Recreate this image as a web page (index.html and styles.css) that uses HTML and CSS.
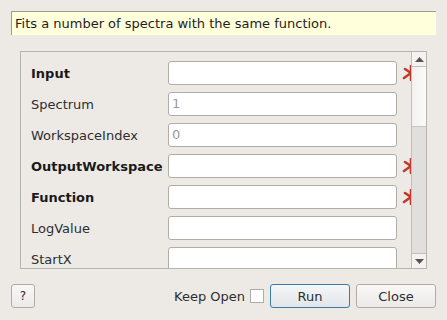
FILE: index.html
```
<!DOCTYPE html>
<html>
<head>
<meta charset="utf-8">
<link rel="stylesheet" href="styles.css">
</head>
<body>
<div class="desc">Fits a number of spectra with the same function.</div>
<div class="scrollarea">
  <div class="viewport">
    <div class="row"><span class="lbl req">Input</span><span class="field"></span><svg class="star" width="12" height="16" viewBox="0 0 12 16"><g stroke="#c0392b" stroke-width="2.6" stroke-linecap="round"><line x1="10" y1="8" x2="4" y2="4"/><line x1="10" y1="8" x2="3" y2="13"/><line x1="10" y1="8" x2="10" y2="1"/><line x1="10" y1="8" x2="10" y2="15"/></g></svg></div>
    <div class="row"><span class="lbl">Spectrum</span><span class="field ph">1</span></div>
    <div class="row"><span class="lbl">WorkspaceIndex</span><span class="field ph">0</span></div>
    <div class="row"><span class="lbl req">OutputWorkspace</span><span class="field"></span><svg class="star" width="12" height="16" viewBox="0 0 12 16"><g stroke="#c0392b" stroke-width="2.6" stroke-linecap="round"><line x1="10" y1="8" x2="4" y2="4"/><line x1="10" y1="8" x2="3" y2="13"/><line x1="10" y1="8" x2="10" y2="1"/><line x1="10" y1="8" x2="10" y2="15"/></g></svg></div>
    <div class="row"><span class="lbl req">Function</span><span class="field"></span><svg class="star" width="12" height="16" viewBox="0 0 12 16"><g stroke="#c0392b" stroke-width="2.6" stroke-linecap="round"><line x1="10" y1="8" x2="4" y2="4"/><line x1="10" y1="8" x2="3" y2="13"/><line x1="10" y1="8" x2="10" y2="1"/><line x1="10" y1="8" x2="10" y2="15"/></g></svg></div>
    <div class="row"><span class="lbl">LogValue</span><span class="field"></span></div>
    <div class="row"><span class="lbl">StartX</span><span class="field"></span></div>
  </div>
  <div class="scrollbar">
    <div class="sbtn"><svg width="9" height="5" viewBox="0 0 9 5"><polygon points="0,5 9,5 4.5,0" fill="#555"/></svg></div>
    <div class="thumb"></div>
    <div class="track"></div>
    <div class="sbtn down"><svg width="9" height="5" viewBox="0 0 9 5"><polygon points="0,0 9,0 4.5,5" fill="#555"/></svg></div>
  </div>
</div>
<div class="bottom">
  <button class="btn help">?</button>
  <div class="spacer"></div>
  <span class="keep">Keep Open</span>
  <span class="check"></span>
  <button class="btn run">Run</button>
  <button class="btn close">Close</button>
</div>
</body>
</html>
```
FILE: styles.css
```
html, body {
  margin: 0;
  padding: 0;
  background: #edeae6;
  font-family: "DejaVu Sans", sans-serif;
  font-size: 13px;
  color: #2e2e2e;
}
body {
  width: 447px;
  height: 320px;
  overflow: hidden;
}
.desc {
  margin: 11px 11px 0 11px;
  height: 24px;
  box-sizing: border-box;
  background: #ffffdc;
  border-left: 1px solid #9c9a96;
  border-top: 1px solid #9c9a96;
  padding: 3px 0 0 3px;
  line-height: 18px;
  color: #1e1e1e;
}
.scrollarea {
  margin: 16px 0 0 20px;
  width: 407px;
  height: 218px;
  box-sizing: border-box;
  border: 1px solid #b7b3ae;
  display: flex;
}
.viewport {
  flex: 1;
  overflow: hidden;
  padding: 9px 0 0 10px;
  display: flex;
  flex-direction: column;
  gap: 7px;
}
.row {
  display: flex;
  align-items: center;
  height: 24px;
  flex-shrink: 0;
}
.lbl {
  width: 137px;
  flex-shrink: 0;
  color: #2e2e2e;
}
.lbl.req {
  font-weight: bold;
  color: #1a1a1a;
}
.field {
  width: 229px;
  height: 24px;
  box-sizing: border-box;
  background: #fff;
  border: 1px solid #b0ada8;
  border-radius: 3px;
  flex-shrink: 0;
  padding-left: 3px;
  line-height: 22px;
}
.field.ph {
  color: #9a9a9a;
}
.star {
  flex-shrink: 0;
  margin-left: 4px;
}
.scrollbar {
  width: 14px;
  border-left: 1px solid #c2beb9;
  display: flex;
  flex-direction: column;
}
.sbtn {
  height: 14px;
  background: #f4f3f1;
  border-bottom: 1px solid #c2beb9;
  display: flex;
  align-items: center;
  justify-content: center;
}
.sbtn.down {
  border-bottom: none;
  border-top: 1px solid #c2beb9;
}
.thumb {
  height: 59px;
  background: linear-gradient(to right, #f2f1ef, #fbfbfa);
  border-bottom: 1px solid #c8c5c0;
}
.track {
  flex: 1;
  background: #e0dfdc;
}
.bottom {
  display: flex;
  align-items: center;
  margin: 15px 11px 0 11px;
  height: 24px;
}
.spacer {
  flex: 1;
}
.btn {
  height: 24px;
  box-sizing: border-box;
  font-family: "DejaVu Sans", sans-serif;
  font-size: 13px;
  color: #2e2e2e;
  border: 1px solid #b0ada8;
  border-radius: 3px;
  background: linear-gradient(#f8f8f7, #eceae8);
  padding: 0;
}
.help {
  width: 24px;
  font-size: 12px;
}
.keep {
  margin-right: 5px;
}
.check {
  width: 12px;
  height: 12px;
  background: #fff;
  border: 1px solid #b0ada8;
  margin-right: 6px;
}
.run {
  width: 80px;
  border-color: #3a7bab;
  background: linear-gradient(#f4f6f7, #e1e6ea);
  margin-right: 6px;
}
.close {
  width: 80px;
}
```
